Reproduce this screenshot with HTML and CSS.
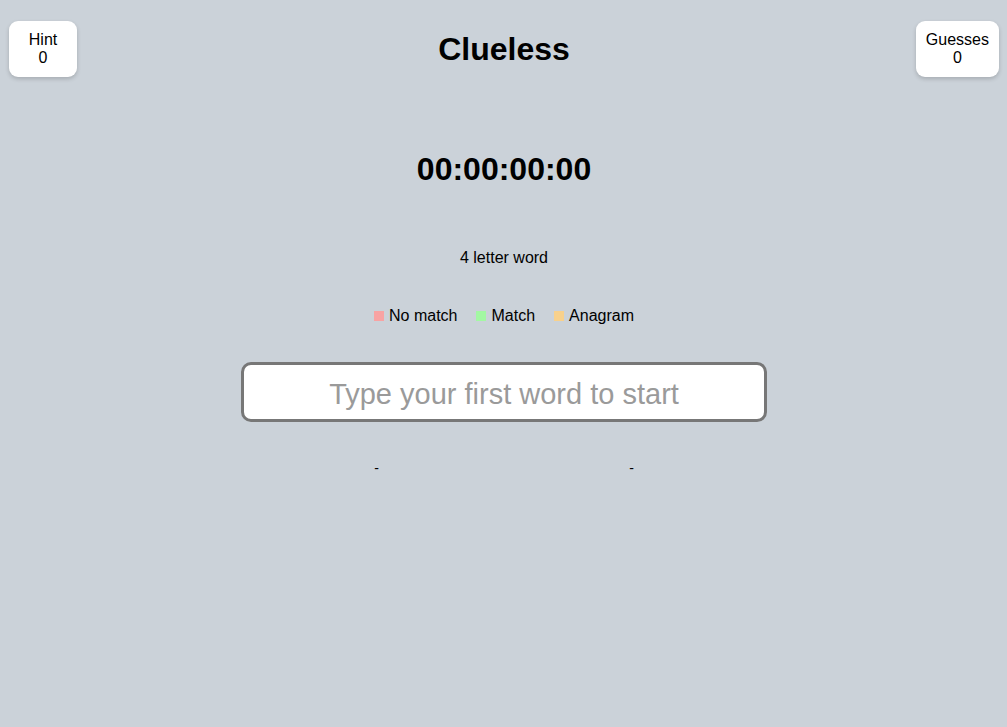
FILE: index.html
```html
<!DOCTYPE html>
<html>
<head>
<meta charset="utf-8">
<link rel="stylesheet" href="styles.css">
</head>
<body>
<div class="page">
  <header class="header">
    <div class="stat">
      <div>Hint</div>
      <div>0</div>
    </div>
    <h1 class="title">Clueless</h1>
    <div class="stat stat-right">
      <div>Guesses</div>
      <div>0</div>
    </div>
  </header>
  <div class="timer">00:00:00:00</div>
  <div class="info">4 letter word</div>
  <div class="legend">
    <span class="legend-item"><span class="sq sq-no"></span>No match</span>
    <span class="legend-item"><span class="sq sq-match"></span>Match</span>
    <span class="legend-item"><span class="sq sq-ana"></span>Anagram</span>
  </div>
  <div class="input-wrap">
    <input class="word-input" type="text" placeholder="Type your first word to start">
  </div>
  <div class="columns">
    <div class="col">-</div>
    <div class="col">-</div>
  </div>
</div>
</body>
</html>
```
FILE: styles.css
```css
html, body {
  margin: 0;
  padding: 0;
  background: #cbd2d9;
  font-family: "Liberation Sans", Arial, sans-serif;
  color: #000;
}
.page {
  min-height: 727px;
  padding: 21px 8px 0 9px;
  box-sizing: border-box;
}
.header {
  display: grid;
  grid-template-columns: 1fr auto 1fr;
  align-items: center;
}
.stat {
  justify-self: start;
  background: #fff;
  border-radius: 9px;
  box-shadow: 0 2px 4px rgba(0,0,0,0.18);
  height: 56px;
  min-width: 68px;
  padding: 0 10px;
  box-sizing: border-box;
  display: flex;
  flex-direction: column;
  justify-content: center;
  align-items: center;
  font-size: 16px;
  line-height: 18px;
}
.stat-right {
  justify-self: end;
  margin-right: 0;
}
.title {
  margin: 0;
  font-size: 32px;
  font-weight: bold;
  line-height: 37px;
  text-align: center;
}
.timer {
  margin-top: 74px;
  text-align: center;
  font-size: 32px;
  font-weight: bold;
  line-height: 37px;
}
.info {
  margin-top: 61px;
  text-align: center;
  font-size: 16px;
  line-height: 18px;
}
.legend {
  margin-top: 40px;
  display: flex;
  justify-content: center;
  gap: 19px;
  font-size: 16px;
  line-height: 18px;
}
.legend-item {
  display: flex;
  align-items: center;
}
.sq {
  display: inline-block;
  width: 10px;
  height: 10px;
  margin-right: 5px;
}
.sq-no { background: #f8a3a3; }
.sq-match { background: #a3f8a3; }
.sq-ana { background: #f8d18c; }
.input-wrap {
  margin-top: 37px;
  display: flex;
  justify-content: center;
}
.word-input {
  width: 526px;
  height: 60px;
  box-sizing: border-box;
  border: 3px solid #777;
  border-radius: 10px;
  background: #fff;
  font-family: "Liberation Sans", Arial, sans-serif;
  font-size: 29px;
  text-align: center;
  outline: none;
  padding: 4px 10px 0;
}
.word-input::placeholder {
  color: #9a9a9a;
}
.columns {
  margin-top: 37px;
  display: grid;
  grid-template-columns: 255px 255px;
  justify-content: center;
  font-size: 14px;
  line-height: 18px;
}
.col {
  text-align: center;
}
```
